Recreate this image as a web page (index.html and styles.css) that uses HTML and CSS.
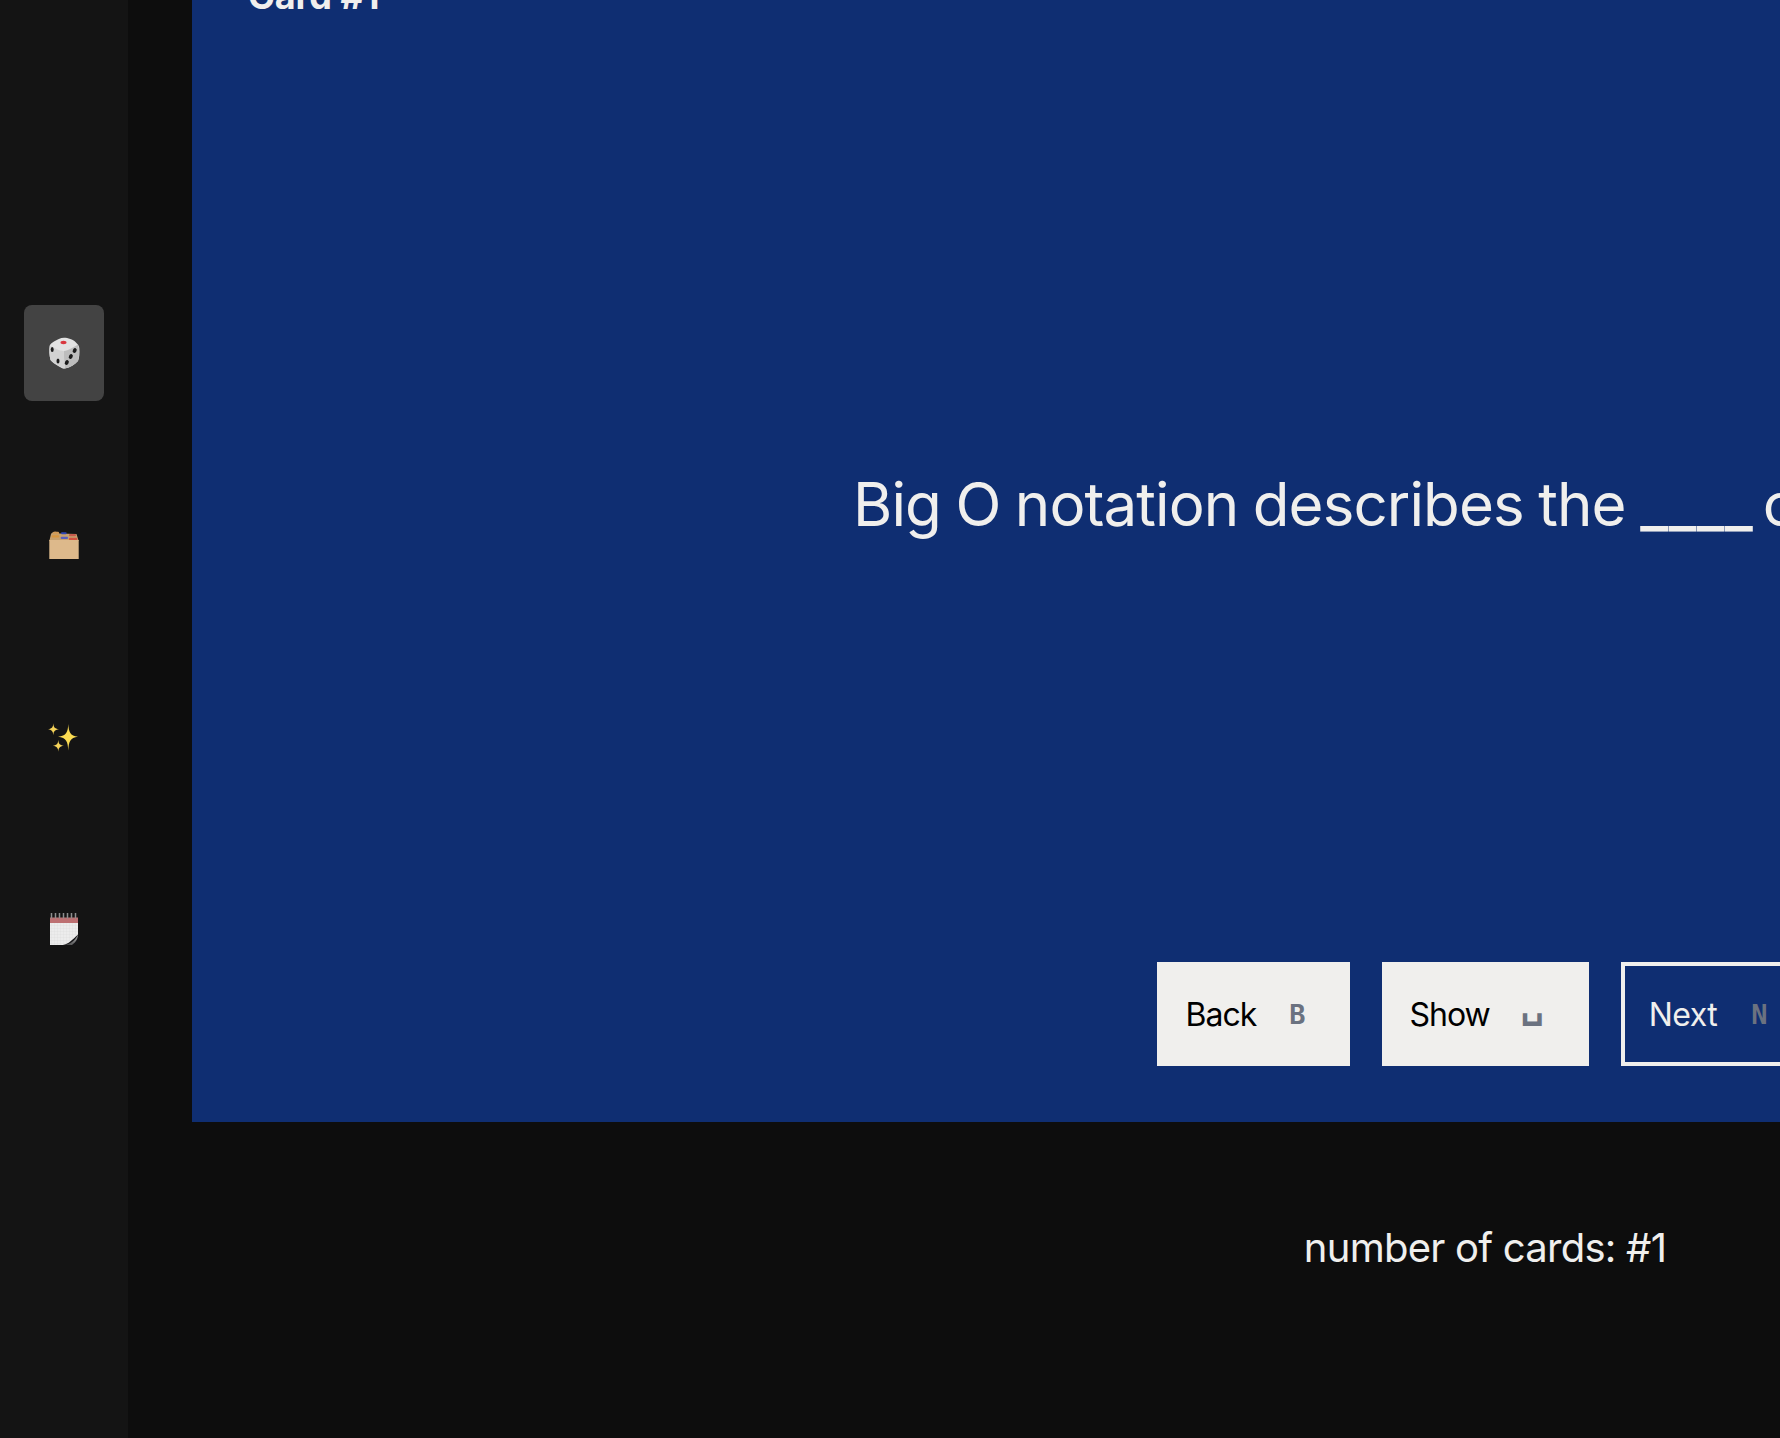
FILE: index.html
```html
<!DOCTYPE html>
<html lang="en">
<head>
<meta charset="utf-8">
<title>Flashcards</title>
<link rel="stylesheet" href="styles.css">
</head>
<body>
<div class="app">
  <nav class="sidebar">
    <a class="nav-item active">
      <svg class="icon" viewBox="0 0 32 32"><path d="M16 .8C20 .8 25 2.500 27.500 5C29.500 7 31 8.500 31.300 11C31.800 16 31.300 21 30 24C27 27.500 22 30.500 17 31.500C15 32 13.500 31 11 29.500C8 27.500 4 25.500 2.500 23C1.300 18 1 13 1.500 9C2 7 4 5.800 6 4.500C9 2.800 12.500 .8 16 .8Z" fill="#e2e2e2"/><path d="M30 7.500C31.500 14 31.300 20 30 24C27 27.500 22 30.500 16.800 31.500C16.300 25 15.800 19 15.800 14C20 13.500 26 10 30 7.500Z" fill="#bdbdbd"/><path d="M2.200 8.500C6.500 11.500 11 13.800 15.800 14C16 20 16.300 26 16.800 31.500C12 30 6 26.500 2.500 23C1.300 18 1 13 2.200 8.500Z" fill="#d2d2d2"/><ellipse cx="15.500" cy="5.500" rx="3" ry="1.700" fill="#d9363e"/><ellipse cx="4.200" cy="12.500" rx="1.500" ry="2.600" fill="#1c1c1c"/><ellipse cx="10" cy="24" rx="1.500" ry="2.600" fill="#1c1c1c"/><ellipse cx="26.700" cy="13.500" rx="1.900" ry="2.500" transform="rotate(25 26.700 13.500)" fill="#1c1c1c"/><ellipse cx="22.800" cy="19.500" rx="1.900" ry="2.600" transform="rotate(25 22.800 19.500)" fill="#1c1c1c"/><ellipse cx="18.800" cy="25.500" rx="1.900" ry="2.600" transform="rotate(25 18.800 25.500)" fill="#1c1c1c"/></svg>
    </a>
    <a class="nav-item">
      <svg class="icon" viewBox="0 0 32 32"><path d="M3 5C4 2.500 8 1.500 11.500 4.500L28.500 5L30.700 12H1.300Z" fill="#c6a06e"/><rect x="3.700" y="6.300" width="7.500" height="2.200" rx="1" fill="#d8963f"/><rect x="5" y="2.800" width="6" height="2.400" rx="1" fill="#d09a58"/><rect x="13" y="3.300" width="5.700" height="2" rx="1" fill="#2f45b5"/><rect x="21" y="5" width="7" height="2.300" rx="1" fill="#c65a4c"/><rect x="12.700" y="7.700" width="7.300" height="2.300" rx="1" fill="#5b60bf"/><rect x="21" y="8.700" width="8.300" height="2.600" rx="1" fill="#d2513f"/><rect x="1.300" y="11" width="29.400" height="19" fill="#ddb98b"/></svg>
    </a>
    <a class="nav-item">
      <svg class="icon" viewBox="0 0 32 32"><path d="M20.300 3C20.800 11 22 14.800 30 15.700C22 16.600 20.800 20.500 20.300 29.700C19.800 20.500 18.600 16.600 10 15.700C18.600 14.800 19.800 11 20.300 3Z" fill="#fadb52"/><path d="M5.300 2.300C5.600 6 6.300 7.600 11 8.300C6.300 9 5.600 10.600 5.300 14.300C5 10.600 4.300 9 0 8.300C4.300 7.600 5 6 5.300 2.300Z" fill="#f5d35a"/><path d="M10.300 18.700C10.600 22.500 11.300 23.900 15.800 24.700C11.300 25.500 10.600 26.900 10.300 30.700C10 26.900 9.300 25.500 4.800 24.700C9.300 23.900 10 22.500 10.300 18.700Z" fill="#f5d35a"/></svg>
    </a>
    <a class="nav-item">
      <svg class="icon" viewBox="0 0 32 32"><defs><pattern id="grid" width="3" height="3" patternUnits="userSpaceOnUse"><rect width="3" height="3" fill="#ececec"/><path d="M0 0H3M0 0V3" stroke="#d8d8d8" stroke-width=".5"/></pattern><linearGradient id="curl" x1="0" y1="1" x2="1" y2="0"><stop offset="0" stop-color="#3a3a3c"/><stop offset="1" stop-color="#a8a8a8"/></linearGradient></defs><rect x="2" y="5" width="28" height="27" fill="url(#grid)"/><rect x="2" y="4.500" width="28" height="5.500" fill="#bd7072"/><path d="M3.500 0V5.500M7.500 0V5.500M11.500 0V5.500M15.500 0V5.500M19.500 0V5.500M23.500 0V5.500M27.500 0V5.500" stroke="#8e8e8e" stroke-width="1.500"/><path d="M15 32C21 31 25 26 30 21.500V32Z" fill="#141416"/><path d="M15 32C22 31.500 27 28 30 21.500C29.800 26 28 29 24 32Z" fill="url(#curl)"/></svg>
    </a>
  </nav>
  <div class="gutter"></div>
  <main class="main">
    <section class="card">
      <h2 class="card-title">Card #1</h2>
      <div class="question"><p class="question-text">Big O notation describes the <span class="blank">____</span> of algorithms</p></div>
      <div class="actions">
        <button class="btn">Back <kbd class="key">B</kbd></button>
        <button class="btn">Show <kbd class="key key-space">␣</kbd></button>
        <button class="btn outline">Next <kbd class="key">N</kbd></button>
      </div>
    </section>
    <footer class="count">number of cards: #1</footer>
  </main>
</div>
</body>
</html>
```
FILE: styles.css
```css
html, body {
  margin: 0;
  height: 100%;
  overflow: hidden;
  background: #0d0d0d;
}
.app {
  display: flex;
  width: 1780px;
  height: 1438px;
  overflow: hidden;
  font-family: Inter, "Liberation Sans", sans-serif;
  color: #f0efed;
}
.sidebar {
  flex: none;
  width: 80px;
  padding: 305px 24px 0;
  display: flex;
  flex-direction: column;
  gap: 96px;
  background: #141414;
}
.nav-item {
  height: 96px;
  border-radius: 8px;
  display: flex;
  align-items: center;
  justify-content: center;
}
.nav-item.active {
  background: #434343;
}
.icon {
  width: 32px;
  height: 32px;
  filter: blur(.5px);
  overflow: visible;
}
.gutter {
  flex: none;
  width: 64px;
}
.main {
  flex: none;
  width: 2586px;
  display: flex;
  flex-direction: column;
}
.card {
  height: 1202px;
  margin-top: -80px;
  box-sizing: border-box;
  padding: 56px;
  background: #0f2e72;
  display: flex;
  flex-direction: column;
}
.card-title {
  margin: 0;
  font-size: 36px;
  line-height: 40px;
  font-weight: 700;
}
.question {
  flex: 1;
  padding: 30px 0 0 6px;
  display: flex;
  align-items: center;
  justify-content: center;
}
.question-text {
  margin: 0;
  font-size: 60px;
  letter-spacing: -.9px;
  word-spacing: -1.5px;
  white-space: nowrap;
}
.blank {
  margin-right: -5px;
  letter-spacing: .5px;
  font-weight: 500;
}
.actions {
  display: flex;
  justify-content: center;
  gap: 32px;
}
.btn {
  height: 104px;
  padding: 0 40px 0 24px;
  display: flex;
  align-items: center;
  gap: 33px;
  border: 4px solid #f0efed;
  background: #f0efed;
  color: #000;
  font: inherit;
  font-size: 32px;
  letter-spacing: -1px;
}
.btn.outline {
  padding-right: 41px;
  gap: 34px;
  background: transparent;
  color: #f0efed;
  letter-spacing: -.5px;
}
.key {
  font-family: "DejaVu Sans Mono", monospace;
  font-size: 27px;
  font-weight: 700;
  letter-spacing: 0;
  color: #6b7280;
}
.key-space {
  margin: 0 1px 20px -2px;
  font-size: 38px;
  line-height: 1;
}
.count {
  flex: 1;
  display: flex;
  align-items: center;
  justify-content: center;
  padding-bottom: 66px;
  font-size: 40px;
  letter-spacing: -.75px;
}
```
